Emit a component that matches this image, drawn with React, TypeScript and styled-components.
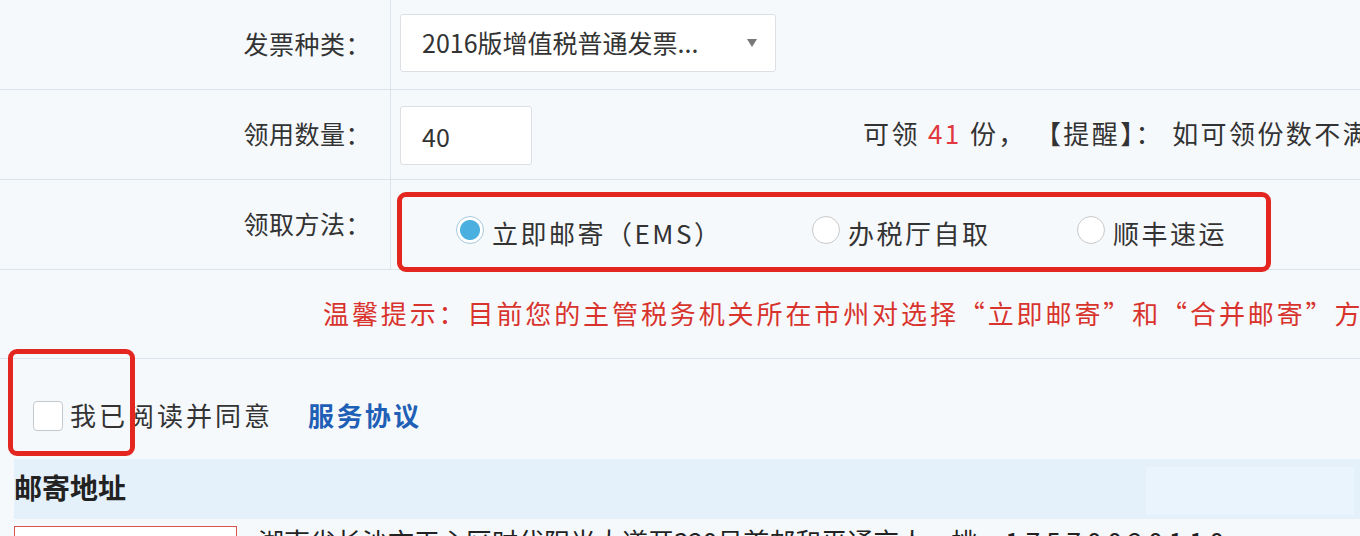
import React from 'react'
import styled, { createGlobalStyle } from 'styled-components'

const Global = createGlobalStyle`
  html, body {
    margin: 0;
    padding: 0;
    background: #f6f9fc;
  }
  body {
    width: 1360px;
    height: 536px;
    overflow: hidden;
    font-family: "Noto Sans CJK SC", "Noto Sans", sans-serif;
    color: #333;
  }
`

const App = () => {
  return (
    <>
      <Global />
      <Page>
        <FormRow>
          <Label>发票种类：</Label>
          <Field>
            <Select>
              <span>2016版增值税普通发票...</span>
              <Caret />
            </Select>
          </Field>
        </FormRow>

        <FormRow>
          <Label>领用数量：</Label>
          <Field>
            <NumInput>40</NumInput>
            <Hint>
              可领 <Red>41</Red> 份， 【提醒】： 如可领份数不满足需求，请先申请增量
            </Hint>
          </Field>
        </FormRow>

        <FormRow>
          <Label>领取方法：</Label>
          <Field top>
            <RadioGroup>
              <Option w="356px">
                <Radio checked />
                立即邮寄（EMS）
              </Option>
              <Option w="265px">
                <Radio />
                办税厅自取
              </Option>
              <Option>
                <Radio />
                顺丰速运
              </Option>
            </RadioGroup>
          </Field>
        </FormRow>

        <TipRow>
          温馨提示：目前您的主管税务机关所在市州对选择“立即邮寄”和“合并邮寄”方式的邮寄费用由税务机关承担
        </TipRow>

        <Agree>
          <Highlight />
          <CheckBox />
          <span>我已阅读并同意</span>
          <Link>服务协议</Link>
        </Agree>

        <SectionHead>
          <h3>邮寄地址</h3>
          <Blur />
        </SectionHead>

        <AddressRow>
          <NameBox />
          <Address>
            湖南省长沙市天心区时代阳光大道开320号首邮和平通交人，桃
            <Phone>17570020110</Phone>
          </Address>
          <Dots>------</Dots>
        </AddressRow>
      </Page>
    </>
  )
}

export default App

const Page = styled.div`
  width: 1360px;
  overflow: hidden;
  display: flex;
  flex-direction: column;
`
const FormRow = styled.div`
  display: flex;
  height: 89px;
  border-bottom: 1px solid #dde3ea;
`
const Label = styled.div`
  flex-shrink: 0;
  width: 371px;
  padding-right: 19px;
  padding-bottom: 4px;
  border-right: 1px solid #dde3ea;
  display: flex;
  align-items: center;
  justify-content: flex-end;
  font-size: 25px;
  letter-spacing: 0.5px;
  color: #333;
`
const Field = styled.div<{ top?: boolean }>`
  flex: 1;
  min-width: 0;
  display: flex;
  align-items: ${({ top }) => (top ? 'flex-start' : 'center')};
  padding-left: ${({ top }) => (top ? '6px' : '9px')};
  padding-top: ${({ top }) => (top ? '12px' : '0')};
  font-size: 26px;
`
const Select = styled.div`
  width: 353px;
  height: 56px;
  padding-left: 21px;
  margin-bottom: 3px;
  border: 1px solid #dcdfe4;
  border-radius: 3px;
  background: #fff;
  display: flex;
  align-items: center;
  justify-content: space-between;
  color: #333;
  font-size: 25px;
  span {
    padding-bottom: 3px;
  }
`
const Caret = styled.i`
  width: 0;
  height: 0;
  margin-right: 18px;
  border-left: 5px solid transparent;
  border-right: 5px solid transparent;
  border-top: 8px solid #777;
`
const NumInput = styled.div`
  flex-shrink: 0;
  width: 109px;
  height: 57px;
  padding-left: 21px;
  border: 1px solid #dcdfe4;
  border-radius: 3px;
  background: #fff;
  display: flex;
  align-items: center;
  font-size: 25px;
  margin-top: 2px;
`
const Hint = styled.div`
  flex: 1;
  min-width: 0;
  overflow: hidden;
  margin-left: 331px;
  white-space: pre;
  font-size: 26px;
  letter-spacing: 2.4px;
  color: #333;
  padding-bottom: 4px;
`
const Red = styled.span`
  color: #e0383e;
`
const RadioGroup = styled.div`
  width: 810px;
  height: 70px;
  padding-left: 54px;
  border: 5px solid #e3261f;
  border-radius: 9px;
  display: flex;
  align-items: center;
  position: relative;
  z-index: 1;
`
const Option = styled.label<{ w?: string }>`
  width: ${({ w }) => w || 'auto'};
  display: flex;
  align-items: center;
  gap: 8px;
  font-size: 26px;
  color: #333;
  letter-spacing: 2.5px;
  white-space: nowrap;
`
const Radio = styled.span<{ checked?: boolean }>`
  flex-shrink: 0;
  width: 28px;
  height: 28px;
  margin-top: -4px;
  box-sizing: border-box;
  border-radius: 50%;
  border: 1px solid ${({ checked }) => (checked ? '#a9c9da' : '#c9c9c9')};
  background: ${({ checked }) =>
    checked ? 'radial-gradient(circle, #4bafe0 0 9.5px, #fff 10.5px)' : '#fff'};
`
const TipRow = styled.div`
  height: 89px;
  border-bottom: 1px solid #dde3ea;
  display: flex;
  align-items: center;
  padding-left: 323px;
  padding-bottom: 4px;
  box-sizing: border-box;
  white-space: nowrap;
  overflow: hidden;
  font-size: 26px;
  letter-spacing: 2.9px;
  color: #d8332c;
`
const Agree = styled.div`
  position: relative;
  height: 97px;
  box-sizing: border-box;
  padding-top: 42px;
  padding-left: 33px;
  display: flex;
  align-items: flex-start;
  font-size: 26px;
  letter-spacing: 3px;
  color: #333;
  span {
    line-height: 28px;
    margin-left: 7px;
  }
`
const CheckBox = styled.div`
  width: 30px;
  height: 30px;
  box-sizing: border-box;
  border: 1px solid #c4c7cc;
  border-radius: 4px;
  background: #fff;
`
const Link = styled.a`
  margin-left: 35px;
  line-height: 28px;
  font-weight: 700;
  letter-spacing: 2.4px;
  color: #1f5fb6;
`
const Highlight = styled.div`
  position: absolute;
  left: 8px;
  top: -10px;
  width: 117px;
  height: 97px;
  border: 5px solid #e3261f;
  border-radius: 9px;
  z-index: 1;
`
const SectionHead = styled.div`
  margin: 3px 0 0 14px;
  height: 60px;
  background: #e4f1fa;
  display: flex;
  align-items: center;
  justify-content: space-between;
  h3 {
    margin: 0 0 4px;
    font-size: 28px;
    font-weight: 700;
    color: #222;
  }
`
const Blur = styled.div`
  width: 208px;
  height: 48px;
  margin-right: 6px;
  margin-top: 4px;
  background: #e9f4fc;
`
const AddressRow = styled.div`
  display: flex;
  align-items: flex-start;
  padding: 5px 0 0 14px;
  height: 20px;
  overflow: hidden;
`
const NameBox = styled.div`
  flex-shrink: 0;
  width: 221px;
  height: 40px;
  margin-top: 2px;
  border: 1px solid #d9534f;
  background: #fff;
`
const Address = styled.div`
  margin-left: 21px;
  margin-top: -2px;
  font-size: 26px;
  color: #222;
  white-space: nowrap;
`
const Phone = styled.span`
  margin-left: 28px;
  letter-spacing: 6px;
`
const Dots = styled.div`
  margin-left: 14px;
  margin-top: -2px;
  font-size: 22px;
  letter-spacing: 2px;
  color: #999;
`
